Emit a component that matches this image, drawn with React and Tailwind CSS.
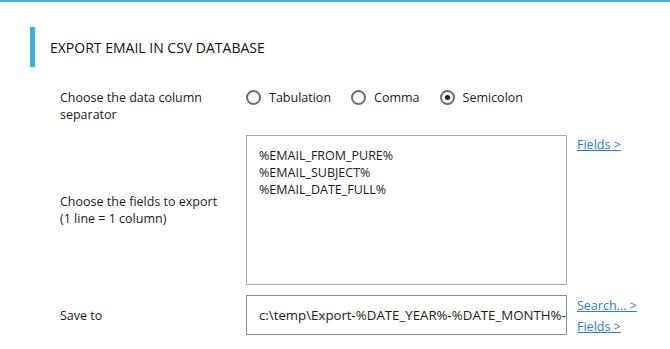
import React from "react";

function Radio({ label, checked }) {
  return (
    <label className="flex items-center">
      <span className="flex h-[15px] w-[15px] items-center justify-center rounded-full border-2 border-[#6d6d6d] bg-white">
        {checked && <span className="h-[5px] w-[5px] rounded-full bg-[#1a1a1a]" />}
      </span>
      <span className="ml-[8px]">{label}</span>
    </label>
  );
}

export default function App() {
  return (
    <div
      className="h-[349px] w-[670px] overflow-hidden border-t-2 border-[#3db1da] bg-white text-[12.5px] leading-[17px] text-[#1b1b1b]"
      style={{ fontFamily: '"Open Sans", "Noto Sans", sans-serif' }}
    >
      <div className="ml-[30px] mt-[25px] flex h-[40px] items-center border-l-[5px] border-[#3db1da] pl-[15px] text-[14px] text-[#111]">
        EXPORT EMAIL IN CSV DATABASE
      </div>
      <div className="ml-[60px] mt-[21px] grid grid-cols-[186px_321px_auto]">
        <div className="pt-[1px]">
          Choose the data column
          <br />
          separator
        </div>
        <div className="col-span-2 flex items-start gap-[20px] pt-[1px]">
          <Radio label="Tabulation" />
          <Radio label="Comma" />
          <Radio label="Semicolon" checked />
        </div>

        <div className="mt-[12px] flex items-center">
          <div>
            Choose the fields to export
            <br />
            (1 line = 1 column)
          </div>
        </div>
        <div className="mt-[12px] h-[150px] border border-[#a8a8a8] px-[12px] pt-[11px]">
          %EMAIL_FROM_PURE%
          <br />
          %EMAIL_SUBJECT%
          <br />
          %EMAIL_DATE_FULL%
        </div>
        <div className="mt-[12px] whitespace-nowrap pl-[10px] pt-[1px]">
          <a className="block text-[#2a7ae2] underline">Fields &gt;</a>
        </div>

        <div className="mt-[10px] flex items-center">Save to</div>
        <div className="mt-[10px] flex h-[40px] items-center overflow-hidden whitespace-nowrap border border-[#8c8c8c] pl-[12px] text-[13.25px]">
          c:\temp\Export-%DATE_YEAR%-%DATE_MONTH%-%DATE_DAY%.csv
        </div>
        <div className="mt-[10px] flex flex-col items-start gap-[4px] whitespace-nowrap pl-[10px] pt-[2px]">
          <a className="block text-[#2a7ae2] underline">Search... &gt;</a>
          <a className="block text-[#2a7ae2] underline">Fields &gt;</a>
        </div>
      </div>
    </div>
  );
}
